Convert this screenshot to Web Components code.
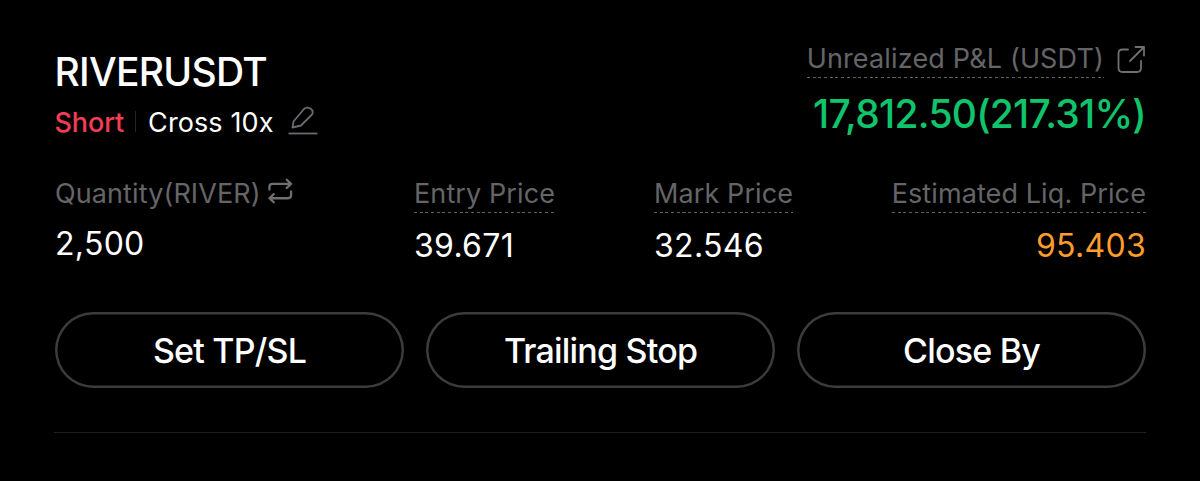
<!DOCTYPE html>
<html lang="en">
<head>
<meta charset="UTF-8">
<title>Position</title>
<style>
  body {
    margin: 0;
    background: #000;
    color: #fff;
    font-family: Inter, "Liberation Sans", sans-serif;
  }
</style>
</head>
<body>
<position-card>
  <position-title slot="title" symbol="RIVERUSDT" side="Short" margin="Cross 10x"></position-title>
  <position-pnl slot="pnl" value="17,812.50(217.31%)">Unrealized P&amp;L (USDT)</position-pnl>
  <position-metric slot="metrics" value="2,500" switchable>Quantity(RIVER)</position-metric>
  <position-metric slot="metrics" value="39.671">Entry Price</position-metric>
  <position-metric slot="metrics" value="32.546">Mark Price</position-metric>
  <position-metric slot="metrics" value="95.403" warning>Estimated Liq. Price</position-metric>
  <pill-button slot="actions">Set TP/SL</pill-button>
  <pill-button slot="actions">Trailing Stop</pill-button>
  <pill-button slot="actions">Close By</pill-button>
</position-card>

<script>
/**
 * Card that lays out one open position.
 */
class PositionCard extends HTMLElement {
  constructor() {
    super();
    this.attachShadow({ mode: "open" });
  }

  connectedCallback() {
    this.shadowRoot.innerHTML = `
      <style>
        :host {
          display: block;
          box-sizing: border-box;
          height: 481px;
          padding: 40px 54px 0 55px;
        }
        header {
          display: flex;
          justify-content: space-between;
          height: 136px;
        }
        .metrics {
          display: grid;
          grid-template-columns: 359px 240px 1fr auto;
          height: 136px;
        }
        .actions {
          display: grid;
          grid-template-columns: repeat(3, 1fr);
          gap: 22px;
        }
        hr {
          height: 1px;
          margin: 44px 0 0 -1px;
          border: 0;
          background: #1f1f20;
        }
      </style>
      <header>
        <slot name="title"></slot>
        <slot name="pnl"></slot>
      </header>
      <div class="metrics"><slot name="metrics"></slot></div>
      <div class="actions"><slot name="actions"></slot></div>
      <hr>
    `;
  }
}

/**
 * Symbol, side and margin mode, with the edit icon.
 */
class PositionTitle extends HTMLElement {
  constructor() {
    super();
    this.attachShadow({ mode: "open" });
  }

  connectedCallback() {
    this.shadowRoot.innerHTML = `
      <style>
        :host { display: block; margin-left: -0.5px; }
        .symbol {
          padding-top: 8px;
          font-size: 39px;
          font-weight: 500;
          line-height: 48px;
          letter-spacing: -0.7px;
        }
        .mode {
          display: flex;
          align-items: center;
          height: 54px;
          font-size: 27px;
          line-height: 54px;
        }
        .side { color: #f53d55; font-weight: 500; letter-spacing: -0.1px; }
        .bar {
          width: 1px;
          height: 21px;
          margin: 0 12px 4px 11px;
          background: #252527;
        }
        .margin { letter-spacing: 0.1px; }
        svg { margin: 0 0 5px 15px; }
      </style>
      <div class="symbol">${this.getAttribute("symbol")}</div>
      <div class="mode">
        <span class="side">${this.getAttribute("side")}</span>
        <span class="bar"></span>
        <span class="margin">${this.getAttribute("margin")}</span>
        <svg width="30" height="30" viewBox="0 0 30 30" fill="none" stroke="#6b6b6f" stroke-width="1.8" stroke-linejoin="round">
          <path d="M4.500 21.500 L5.500 15.500 L16 3 Q18.500 0.500 22.500 2.500 Q26 5 24 8.500 L13 19.500 Z"/>
          <path d="M0.500 27.500 H29.500"/>
        </svg>
      </div>
    `;
  }
}

/**
 * Unrealized profit and loss, aligned right.
 */
class PositionPnl extends HTMLElement {
  constructor() {
    super();
    this.attachShadow({ mode: "open" });
  }

  connectedCallback() {
    this.shadowRoot.innerHTML = `
      <style>
        :host {
          display: flex;
          flex-direction: column;
          align-items: flex-end;
        }
        .row { display: flex; }
        hint-label { letter-spacing: 0.15px; }
        .value {
          margin-top: 12px;
          color: #10c46c;
          font-size: 39px;
          font-weight: 500;
          line-height: 48px;
          letter-spacing: -0.75px;
        }
        svg { margin: 5px 0 0 13px; }
      </style>
      <div class="row">
        <hint-label><slot></slot></hint-label>
        <svg width="29" height="30" viewBox="0 0 29 30" fill="none" stroke="#6f6f72" stroke-width="1.8" stroke-linecap="round" stroke-linejoin="round">
          <path d="M11 4.500 H5.500 Q1.500 4.500 1.500 8.500 V23 Q1.500 27 5.500 27 H20 Q24 27 24 23 V16"/>
          <path d="M13 16 L27 2 M18.500 2 H27 V10.500"/>
        </svg>
      </div>
      <div class="value">${this.getAttribute("value")}</div>
    `;
  }
}

/**
 * Grey label, with a dashed line under it unless it is plain.
 */
class HintLabel extends HTMLElement {
  constructor() {
    super();
    this.attachShadow({ mode: "open" });
  }

  connectedCallback() {
    this.shadowRoot.innerHTML = `
      <style>
        :host {
          display: block;
          height: 38px;
          color: #656568;
          font-size: 27px;
          font-weight: 400;
          line-height: 38px;
          letter-spacing: 0.1px;
          white-space: nowrap;
          background: repeating-linear-gradient(90deg, #626265 0 3px, transparent 3px 5.7px) 0 100% / 100% 1px no-repeat;
        }
        :host([plain]) { background: none; }
      </style>
      <slot></slot>
    `;
  }
}

/**
 * One labelled figure of the position.
 */
class PositionMetric extends HTMLElement {
  constructor() {
    super();
    this.attachShadow({ mode: "open" });
  }

  connectedCallback() {
    const switchable = this.hasAttribute("switchable");
    this.shadowRoot.innerHTML = `
      <style>
        :host {
          display: flex;
          flex-direction: column;
          align-items: flex-start;
        }
        :host([warning]) { align-items: flex-end; }
        .row { display: flex; margin-top: -1px; }
        .value {
          margin-top: 12px;
          font-size: 32px;
          line-height: 42px;
          letter-spacing: 0.3px;
        }
        :host([switchable]) .value { margin-top: 10px; }
        :host([warning]) .value { color: #ff9c2e; }
        svg { margin: 3px 0 0 7px; }
      </style>
      <div class="row">
        <hint-label ${switchable ? "plain" : ""}><slot></slot></hint-label>
        ${switchable ? this.switchIcon() : ""}
      </div>
      <div class="value">${this.getAttribute("value")}</div>
    `;
  }

  switchIcon() {
    return `
      <svg width="25" height="27" viewBox="0 0 26 28" fill="none" stroke="#6f6f72" stroke-width="2.4" stroke-linecap="round" stroke-linejoin="round">
        <path d="M1.500 12 V9 Q1.500 6 4.500 6 H24 M19.500 1.800 L24 6 L19.500 10.200"/>
        <path d="M24 14 V18 Q24 21 21 21 H1.500 M6 16.800 L1.500 21 L6 25.200"/>
      </svg>
    `;
  }
}

/**
 * Outlined pill button.
 */
class PillButton extends HTMLElement {
  constructor() {
    super();
    this.attachShadow({ mode: "open" });
  }

  connectedCallback() {
    this.shadowRoot.innerHTML = `
      <style>
        :host { display: block; }
        button {
          display: block;
          box-sizing: border-box;
          width: 100%;
          height: 76px;
          padding: 1px 0 0;
          border: 0;
          border-radius: 38px;
          box-shadow: inset 0 0 0 2.5px #3c3c3e;
          background: none;
          color: inherit;
          font: 500 34px/1 Inter, "Liberation Sans", sans-serif;
          letter-spacing: -0.8px;
        }
      </style>
      <button type="button"><slot></slot></button>
    `;
  }
}

// Define the custom elements
customElements.define("hint-label", HintLabel);
customElements.define("position-title", PositionTitle);
customElements.define("position-pnl", PositionPnl);
customElements.define("position-metric", PositionMetric);
customElements.define("pill-button", PillButton);
customElements.define("position-card", PositionCard);
</script>
</body>
</html>
